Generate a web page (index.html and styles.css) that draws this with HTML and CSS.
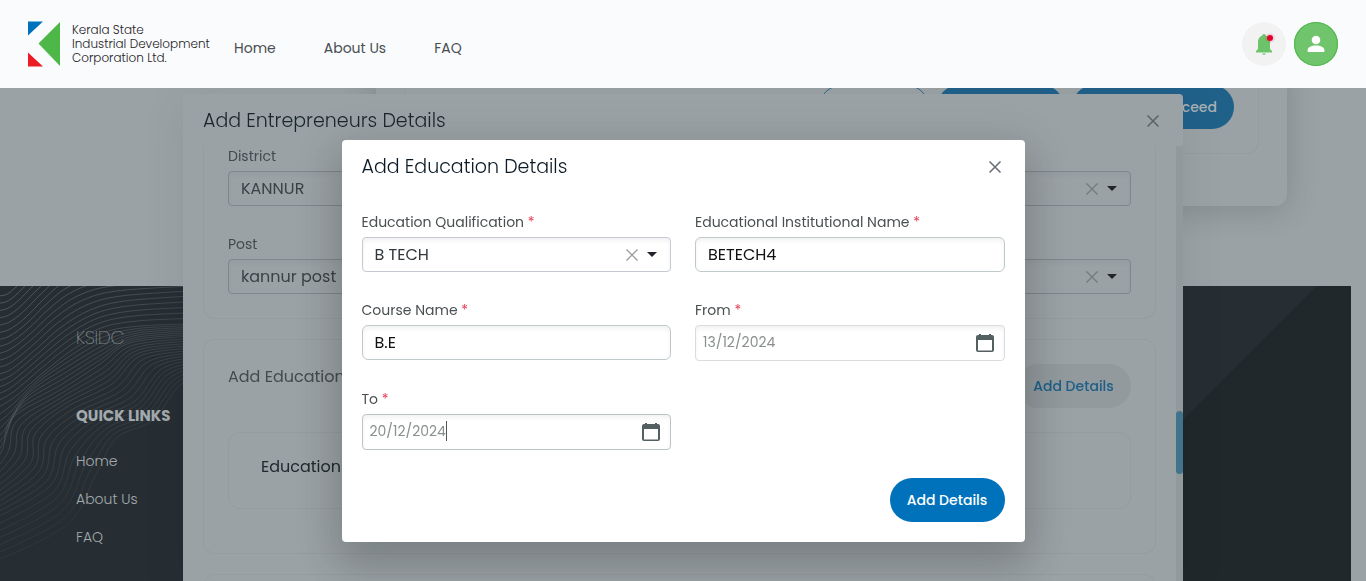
FILE: index.html
```html
<!DOCTYPE html>
<html lang="en">
<head>
<meta charset="utf-8">
<title>KSIDC</title>
<meta name="viewport" content="width=device-width, initial-scale=1">
<link rel="stylesheet" href="styles.css">
</head>
<body>
<header class="topbar">
  <a class="brand" href="#">
    <svg class="brand-mark" viewBox="0 0 32 46" width="32" height="46" aria-hidden="true">
      <path fill="#0072bc" d="M0 .5h15L0 14.500z"/>
      <path fill="#4db848" d="M32 1v44L10.500 22.500z"/>
      <path fill="#ed1c24" d="M0 31.500 15 45.500H0z"/>
    </svg>
    <span class="brand-name">Kerala State<br>Industrial Development<br>Corporation Ltd.</span>
  </a>
  <nav class="topnav">
    <a href="#">Home</a>
    <a href="#">About Us</a>
    <a href="#">FAQ</a>
  </nav>
  <div class="top-actions">
    <button class="round bell" aria-label="Notifications">
      <svg viewBox="0 0 44 44" width="44" height="44">
        <path fill="#6cc36a" d="M22 12c-1.100 0-1.800.8-1.800 1.700-2.600.8-4.200 3-4.200 6V27l-2 2v1.500h16V29l-2-2v-7.300c0-3-1.600-5.200-4.200-6 0-.9-.7-1.700-1.800-1.700zM20 31.500a2.200 2.200 0 0 0 4 0z"/>
        <circle cx="28" cy="16" r="5" fill="#e4002b" opacity=".1"/>
        <circle cx="28" cy="16" r="3" fill="#e4002b"/>
      </svg>
    </button>
    <button class="round avatar" aria-label="Account">
      <svg viewBox="0 0 44 44" width="44" height="44">
        <circle cx="22" cy="18" r="4.300" fill="#fff"/>
        <path fill="#fff" d="M13.500 29c0-4 4-5.400 8.500-5.400s8.500 1.400 8.500 5.400c0 .7-.4 1-1 1h-15c-.6 0-1-.3-1-1z"/>
      </svg>
    </button>
  </div>
</header>

<div class="page">
  <main class="content">
    <section class="card">
      <div class="card-inner">
        <button class="pill pill-outline">Cancel</button>
        <button class="pill pill-dim pill-mid">Save Draft</button>
        <button class="pill pill-dim pill-wide">Save &amp; Proceed</button>
      </div>
    </section>
  </main>
  <footer class="footer">
    <svg class="contours" id="contours" aria-hidden="true">
      <defs>
        <linearGradient id="fade" gradientUnits="userSpaceOnUse" x1="0" y1="0" x2="150" y2="220">
          <stop offset="0" stop-color="#6d7678" stop-opacity=".6"/>
          <stop offset=".5" stop-color="#6d7678" stop-opacity=".3"/>
          <stop offset="1" stop-color="#6d7678" stop-opacity=".04"/>
        </linearGradient>
      </defs>
    </svg>
    <div class="footer-text">
      <p class="footer-brand">KSIDC</p>
      <h2 class="footer-title">QUICK LINKS</h2>
      <ul class="footer-links">
        <li><a href="#">Home</a></li>
        <li><a href="#">About Us</a></li>
        <li><a href="#">FAQ</a></li>
      </ul>
    </div>
  </footer>
</div>

<section class="modal modal-back" aria-label="Add Entrepreneurs Details">
  <header class="modal-head">
    <h2>Add Entrepreneurs Details</h2>
    <button class="icon-btn" aria-label="Close"><svg viewBox="0 0 12 12" width="12" height="12"><path d="M.5.5l11 11M11.500.5l-11 11"/></svg></button>
  </header>
  <div class="back-body">
    <div class="back-scroll">
      <div class="panel panel-cut">
        <div class="grid">
          <div class="field">
            <label for="district">District</label>
            <div class="control">
              <select id="district"><option>KANNUR</option></select>
            </div>
          </div>
          <div class="field">
            <label for="taluk">Taluk</label>
            <div class="control">
              <select id="taluk"><option></option></select>
              <button class="icon-btn clear" aria-label="Clear"><svg viewBox="0 0 12 12" width="12" height="12"><path d="M.5.5l11 11M11.500.5l-11 11"/></svg></button>
              <svg class="arrow" viewBox="0 0 10 5" width="10" height="5"><path d="M0 0h10L5 5z"/></svg>
            </div>
          </div>
          <div class="field">
            <label for="post">Post</label>
            <div class="control">
              <select id="post"><option>kannur post</option></select>
            </div>
          </div>
          <div class="field">
            <label for="village">Village</label>
            <div class="control">
              <select id="village"><option></option></select>
              <button class="icon-btn clear" aria-label="Clear"><svg viewBox="0 0 12 12" width="12" height="12"><path d="M.5.5l11 11M11.500.5l-11 11"/></svg></button>
              <svg class="arrow" viewBox="0 0 10 5" width="10" height="5"><path d="M0 0h10L5 5z"/></svg>
            </div>
          </div>
        </div>
      </div>
      <div class="panel">
        <div class="panel-head">
          <h3>Add Education</h3>
          <button class="pill pill-soft">Add Details</button>
        </div>
        <div class="table-box">
          <table><thead><tr><th>Education</th></tr></thead></table>
        </div>
      </div>
      <div class="panel"></div>
    </div>
    <div class="track"><div class="thumb"></div></div>
  </div>
</section>

<section class="modal modal-front" role="dialog" aria-label="Add Education Details">
  <header class="modal-head">
    <h2>Add Education Details</h2>
    <button class="icon-btn" aria-label="Close"><svg viewBox="0 0 12 12" width="12" height="12"><path d="M.5.5l11 11M11.500.5l-11 11"/></svg></button>
  </header>
  <form class="front-form">
    <div class="grid">
      <div class="field">
        <label for="qualification">Education Qualification <span class="req">*</span></label>
        <div class="control">
          <select id="qualification"><option>B TECH</option></select>
          <button type="button" class="icon-btn clear" aria-label="Clear"><svg viewBox="0 0 12 12" width="12" height="12"><path d="M.5.5l11 11M11.500.5l-11 11"/></svg></button>
          <svg class="arrow" viewBox="0 0 10 5" width="10" height="5"><path d="M0 0h10L5 5z"/></svg>
        </div>
      </div>
      <div class="field">
        <label for="institution">Educational Institutional Name <span class="req">*</span></label>
        <div class="control control-text"><input id="institution" type="text" value="BETECH4"></div>
      </div>
      <div class="field">
        <label for="course">Course Name <span class="req">*</span></label>
        <div class="control control-text"><input id="course" type="text" value="B.E"></div>
      </div>
      <div class="field">
        <label for="from">From <span class="req">*</span></label>
        <div class="control control-date control-light">
          <input id="from" type="text" value="13/12/2024">
          <button type="button" class="icon-btn calendar" aria-label="Pick start date"><svg viewBox="0 0 18 19" width="18" height="19"><path fill-rule="evenodd" d="M3 0h2v1h8V0h2v1h1a2 2 0 0 1 2 2v13a2 2 0 0 1-2 2H2a2 2 0 0 1-2-2V3a2 2 0 0 1 2-2h1zM2 6v10.500h14V6z"/></svg></button>
        </div>
      </div>
      <div class="field">
        <label for="to">To <span class="req">*</span></label>
        <div class="control control-date">
          <input id="to" type="text" value="20/12/2024"><span class="caret"></span>
          <button type="button" class="icon-btn calendar" aria-label="Pick end date"><svg viewBox="0 0 18 19" width="18" height="19"><path fill-rule="evenodd" d="M3 0h2v1h8V0h2v1h1a2 2 0 0 1 2 2v13a2 2 0 0 1-2 2H2a2 2 0 0 1-2-2V3a2 2 0 0 1 2-2h1zM2 6v10.500h14V6z"/></svg></button>
        </div>
      </div>
    </div>
    <div class="form-foot"><button type="button" class="pill pill-primary">Add Details</button></div>
  </form>
</section>
<script src="contours.js"></script>
</body>
</html>
```

FILE: styles.css
```css
* { box-sizing: border-box; }
html, body { height: 100%; }
body {
  margin: 0;
  overflow: hidden;
  background: #9aa2a5;
  color: #4a4f52;
  font: 400 14px/20px Poppins, Inter, "Open Sans", sans-serif;
}
h2, h3, p, ul { margin: 0; padding: 0; }
ul { list-style: none; }
a { color: inherit; text-decoration: none; }
button, input, select { font: inherit; color: inherit; }
button { border: 0; padding: 0; background: none; cursor: pointer; }

/* top bar */
.topbar {
  position: fixed;
  inset: 0 0 auto 0;
  z-index: 8;
  display: flex;
  align-items: center;
  gap: 24px;
  height: 88px;
  padding: 0 28px;
  background: #f9fbfd;
  color: #4a4e52;
}
.brand { display: flex; align-items: center; gap: 12px; min-width: 182px; }
.brand-name { font-size: 12px; line-height: 14px; font-weight: 300; color: #1f2225; white-space: nowrap; }
.topnav { display: flex; gap: 48px; padding-top: 8px; }
.top-actions { display: flex; gap: 8px; margin-left: auto; }
.round { width: 44px; height: 44px; border-radius: 50%; }
.round svg { display: block; }
.bell { background: #f2f2f2; }
.avatar { background: #70c46b; box-shadow: inset 0 0 0 1px #4db848; }

/* page behind the dialogs */
.page { display: flex; flex-direction: column; min-height: 100%; padding-right: 15px; }
.content { padding: 60px 64px 80px 376px; }
.card {
  padding: 0 28px 52px;
  border-radius: 0 0 12px 12px;
  background: #9aa2a5;
  box-shadow: 0 4px 32px rgba(30, 40, 44, .2);
}
.card-inner {
  display: flex;
  justify-content: flex-end;
  gap: 8px;
  padding: 25px 24px 24px;
  border: 1px solid #949c9f;
  border-top: 0;
  border-radius: 0 0 12px 12px;
}
.pill {
  height: 44px;
  padding: 0 17px;
  border-radius: 22px;
  font-weight: 500;
  font-size: 14px;
  white-space: nowrap;
}
.pill-outline { width: 110px; border: 1px solid #2b678d; color: #2b678d; }
.pill-dim { background: #20618a; color: #a9b1b4; }
.pill-mid { width: 127px; }
.pill-wide { width: 162px; text-align: right; }
.pill-soft { min-width: 115px; background: #929a9d; color: #1d5f89; }
.pill-primary { min-width: 115px; background: #0072bc; color: #fff; }

.footer {
  position: relative;
  flex: 1;
  min-height: 295px;
  background: linear-gradient(135deg, #262e34 931px, #20282b 931px);
  color: #a3aaad;
}
.contours { position: absolute; inset: 0; width: 183px; height: 100%; fill: none; stroke: url(#fade); }
.footer-text { position: relative; padding: 40px 76px; }
.footer-brand { font-size: 18px; line-height: 24px; font-weight: 200; color: #d0d5d7; }
.footer-title { margin-top: 54px; font-size: 15px; line-height: 24px; font-weight: 700; }
.footer-links { display: grid; gap: 18px; margin-top: 23px; font-weight: 300; }

/* dialogs */
.modal { position: fixed; right: 0; left: 0; margin: 0 auto; border-radius: 4px; }
.modal-head {
  display: flex;
  align-items: center;
  justify-content: space-between;
  height: 52px;
  padding: 2px 24px 0 20px;
}
.modal-head h2 { font-size: 19px; line-height: 28px; font-weight: 300; color: #0c1a26; }
.icon-btn { display: flex; align-items: center; justify-content: center; }
.icon-btn path { fill: none; stroke: #666d74; stroke-width: 1.5; }

.modal-back {
  top: 94px;
  bottom: 0;
  z-index: 6;
  width: 1000px;
  max-width: 100%;
  display: flex;
  flex-direction: column;
  border-radius: 4px 4px 0 0;
  background: #9aa2a5;
  box-shadow: 0 8px 46px 4px rgba(0, 0, 0, .06);
  color: #434a4e;
}
.modal-back .modal-head h2 { color: #1a262d; }
.modal-back .icon-btn path { stroke: #5a6266; }
.back-body { display: flex; flex: 1; min-height: 0; }
.back-scroll { flex: 1; overflow: hidden; padding: 0 20px; }
.track { width: 7px; padding-top: 265px; background: #92999c; }
.thumb { height: 63px; border-radius: 4px; background: #42738d; }

.panel { min-height: 60px; margin-bottom: 20px; padding: 24px 24px 44px; border: 1px solid #949c9f; border-radius: 12px; }
.panel-cut { padding: 0 24px 24px; border-top: 0; border-radius: 0 0 12px 12px; }
.panel-head { display: flex; justify-content: space-between; }
.panel-head h3 { padding-top: 3px; font-size: 16px; line-height: 20px; font-weight: 400; color: #434b4f; }
.table-box { margin-top: 24px; padding: 24px 32px 31px; border: 1px solid #949c9f; border-radius: 12px; }
table { border-collapse: collapse; }
th { padding: 0; font-size: 16px; line-height: 20px; font-weight: 400; color: #20292d; text-align: left; }

.grid { display: grid; grid-template-columns: 1fr 1fr; gap: 28px 24px; align-items: start; }
.field { display: grid; grid-template-columns: minmax(0, 1fr); gap: 5px; min-width: 0; }
.req { color: #e83a55; }
.control {
  display: flex;
  align-items: center;
  height: 35px;
  padding: 0 13px 0 12px;
  border: 1px solid #c5cad2;
  border-radius: 4px;
  box-shadow: inset 0 3px 4px rgba(0, 0, 0, .05);
}
.control select, .control input {
  min-width: 0;
  border: 0;
  padding: 0;
  outline: 0;
  background: transparent;
  appearance: none;
}
.control select { flex: 1; height: 24px; font-size: 16px; color: #33383c; }
.arrow { margin-left: 9px; fill: #212529; }
.clear path { stroke: #999; stroke-width: 1.2; }
.control-text { border-color: #bfc9cc; border-radius: 6px; }
.control-text input { flex: 1; height: 24px; font-size: 16px; color: #111; }
.control-date { height: 36px; padding: 0 10px 0 7px; border-color: #bcc5c6; }
.control-date input { field-sizing: content; height: 22px; margin-bottom: 2px; font-size: 14px; color: #8a8f90; }
.control-light { border-color: #d9dcde; }
.caret { width: 1px; height: 20px; margin-bottom: 2px; background: #555; }
.calendar { margin-left: auto; }
.icon-btn.calendar path { fill: #545f62; stroke: none; }

.modal-back .control { border-color: #7f878c; box-shadow: inset 0 3px 4px rgba(0, 0, 0, .03); }
.modal-back .control select { color: #3a4246; }
.modal-back .clear path { stroke: #71797c; }

.modal-front {
  top: 140px;
  z-index: 7;
  width: 50%;
  min-width: 480px;
  background: #fff;
  box-shadow: 0 24px 38px 3px rgba(0, 0, 0, .12), 0 9px 46px 8px rgba(0, 0, 0, .1);
}
.front-form { padding: 20px; }
.form-foot { display: flex; justify-content: flex-end; margin-top: 28px; }
```

FILE: contours.js
```js
// Contour lines of the footer: each band is blended between two key curves.
const keys = [
  [[-10,10],[5,9],[15,2],[25,-8],[40,-20],[90,-40],[190,-60]],
  [[-10,48],[8,44],[25,32],[45,12],[65,-4],[100,-15],[190,-20]],
  [[-10,90],[10,84],[35,64],[60,42],[90,24],[125,15],[190,10]],
  [[-10,125],[12,113],[45,85],[75,62],[105,46],[140,40],[190,38]],
  [[-10,185],[3,162],[12,132],[60,104],[100,78],[130,57],[190,50]],
  [[-10,212],[30,178],[35,148],[65,122],[112,98],[140,70],[190,62]],
  [[-10,235],[50,200],[65,160],[95,134],[135,115],[160,84],[190,74]],
  [[-10,285],[70,245],[100,195],[120,155],[155,138],[180,105],[200,90]]
];
const steps = [5, 6, 5, 7, 5, 5, 7];
const svg = document.getElementById("contours");

function smooth(p) {
  let d = `M${p[0]}`;
  for (let i = 0; i < p.length - 1; i++) {
    const a = p[i - 1] || p[i], b = p[i], c = p[i + 1], e = p[i + 2] || c;
    d += `C${b[0] + (c[0] - a[0]) / 6},${b[1] + (c[1] - a[1]) / 6} ${c[0] - (e[0] - b[0]) / 6},${c[1] - (e[1] - b[1]) / 6} ${c}`;
  }
  return d;
}

steps.forEach((n, k) => {
  for (let s = 0; s < n; s++) {
    const t = s / n;
    const pts = keys[k].map((p, i) => p.map((v, j) => v + (keys[k + 1][i][j] - v) * t));
    const path = document.createElementNS("http://www.w3.org/2000/svg", "path");
    path.setAttribute("d", smooth(pts));
    svg.appendChild(path);
  }
});
```
